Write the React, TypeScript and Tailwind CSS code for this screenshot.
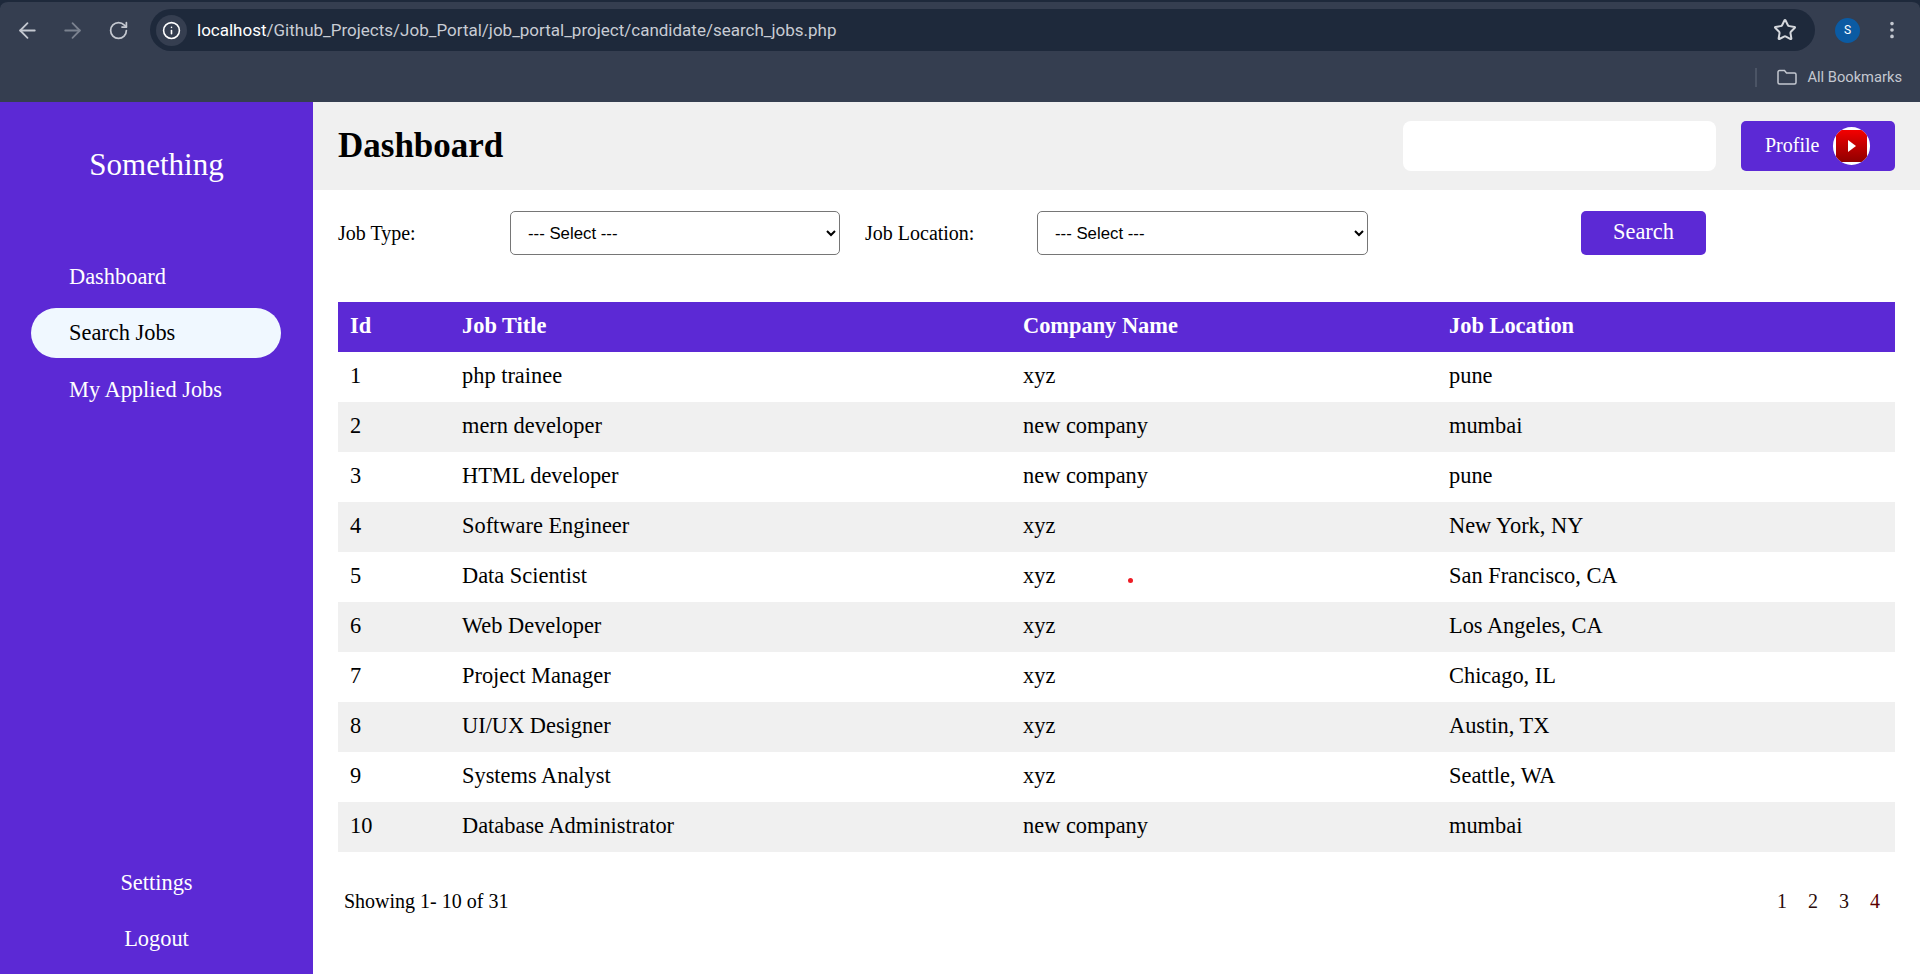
import React from "react";
import { ArrowLeft, ArrowRight, RotateCw, Info, Star, EllipsisVertical } from "lucide-react";

const JOBS = [
  ["1", "php trainee", "xyz", "pune"],
  ["2", "mern developer", "new company", "mumbai"],
  ["3", "HTML developer", "new company", "pune"],
  ["4", "Software Engineer", "xyz", "New York, NY"],
  ["5", "Data Scientist", "xyz", "San Francisco, CA"],
  ["6", "Web Developer", "xyz", "Los Angeles, CA"],
  ["7", "Project Manager", "xyz", "Chicago, IL"],
  ["8", "UI/UX Designer", "xyz", "Austin, TX"],
  ["9", "Systems Analyst", "xyz", "Seattle, WA"],
  ["10", "Database Administrator", "new company", "mumbai"],
];

const BrowserBar = () => (
  <div className="h-[102px] bg-[#1e293b] font-['Roboto',sans-serif]">
    <div className="h-full bg-[#353e50] pt-[7px] rounded-t-[8px] border-t-2 border-[#1e293b] box-border">
      <div className="flex items-center h-[42px]">
        <ArrowLeft size={25} strokeWidth={1.7} className="ml-[15px] text-[#c4c8d0]" />
        <ArrowRight size={25} strokeWidth={1.7} className="ml-[20px] text-[#7b828f]" />
        <RotateCw size={21} strokeWidth={2} className="ml-[23px] text-[#c4c8d0]" />
        <div className="ml-[21px] flex items-center h-[42px] w-[1665px] bg-[#1e293b] rounded-full">
          <div className="ml-[6px] w-[31px] h-[31px] rounded-full bg-[#353e50] flex items-center justify-center">
            <Info size={19} className="text-white" />
          </div>
          <span className="ml-[10px] pt-[2px] text-[17px] text-[#c8ccd4]"><span className="text-white">localhost</span>/Github_Projects/Job_Portal/job_portal_project/candidate/search_jobs.php</span>
          <Star size={24} strokeWidth={2} className="ml-auto mr-[18px] text-[#d5d8dd]" />
        </div>
        <div className="ml-[20px] w-[25px] h-[25px] rounded-full bg-[#0b5ba3] text-white text-[12px] flex items-center justify-center">S</div>
        <EllipsisVertical size={22} className="ml-[21px] text-[#c4c8d0]" />
      </div>
      <div className="flex items-center justify-end h-[26px] mt-[13px] pr-[18px]">
        <div className="w-[2px] h-[19px] bg-[#4b5465] mr-[20px]" />
        <svg width="20" height="16" viewBox="0 0 20 16" fill="none" stroke="#c4c8d0" strokeWidth="1.5" className="mr-[10px]">
          <path d="M1 3a1.5 1.5 0 0 1 1.5-1.5h5l2 2.5h8A1.5 1.5 0 0 1 19 5.5v8a1.5 1.5 0 0 1-1.5 1.5h-15A1.5 1.5 0 0 1 1 13.5z" />
        </svg>
        <span className="text-[14.7px] text-[#c4c8d0]">All Bookmarks</span>
      </div>
    </div>
  </div>
);

const Sidebar = () => (
  <aside className="w-[313px] shrink-0 h-[872px] bg-[#5c29d5] text-white flex flex-col">
    <h2 className="mt-[46px] text-center text-[31px] leading-[34px]">Something</h2>
    <ul className="mt-[69.5px] text-[22.4px] pl-[31px] pr-[32px] flex flex-col gap-[6.5px]">
      <li className="h-[50px] flex items-center pl-[38px]">Dashboard</li>
      <li className="h-[50px] flex items-center pl-[38px] bg-[#f0f8ff] text-black rounded-full">Search Jobs</li>
      <li className="h-[50px] flex items-center pl-[38px]">My Applied Jobs</li>
    </ul>
    <ul className="mt-auto mb-[10px] text-[22.4px] px-[31px] flex flex-col gap-[6.5px] text-center">
      <li className="h-[50px] flex items-center justify-center">Settings</li>
      <li className="h-[50px] flex items-center justify-center">Logout</li>
    </ul>
  </aside>
);

export default function App() {
  return (
    <div className="h-[974px] overflow-hidden bg-white font-['Liberation_Serif',serif] text-black">
      <BrowserBar />
      <div className="flex">
        <Sidebar />
        <main className="flex-1 relative">
          <header className="h-[88px] bg-[#f0f0f0] flex items-center pl-[25px] pr-[25px]">
            <h1 className="text-[35px] font-bold">Dashboard</h1>
            <div className="ml-auto w-[313px] h-[50px] bg-white rounded-[8px]" />
            <button className="ml-[25px] w-[154px] h-[50px] bg-[#5c29d5] text-white rounded-[5px] text-[20px] flex items-center pl-[24px]">
              <span className="pb-[2px]">Profile</span>
              {/* red play tile inside a white round frame */}
              <span className="ml-[14px] w-[37px] h-[38px] rounded-full bg-white overflow-hidden flex items-center justify-center">
                <span className="w-[31px] h-[32px] mb-[1px] rounded-[5px] bg-gradient-to-b from-[#f40000] to-[#900000] flex items-center justify-center">
                  <svg width="8" height="12" viewBox="0 0 8 12"><path d="M0 0l8 6-8 6z" fill="#fff" /></svg>
                </span>
              </span>
            </button>
          </header>

          <div className="flex items-center mt-[21px] ml-[25px] text-[20px]">
            <label className="w-[172px]">Job Type:</label>
            <select className="w-[330px] h-[44px] border border-[#767676] rounded-[5px] pl-[13px] pr-[4px] bg-white font-['Liberation_Sans',sans-serif] text-[16.8px]">
              <option>--- Select ---</option>
            </select>
            <label className="ml-[25px] w-[172px]">Job Location:</label>
            <select className="w-[331px] h-[44px] border border-[#767676] rounded-[5px] pl-[13px] pr-[4px] bg-white font-['Liberation_Sans',sans-serif] text-[16.8px]">
              <option>--- Select ---</option>
            </select>
            <button className="ml-[213px] w-[125px] h-[44px] bg-[#5c29d5] text-white rounded-[5px] text-[22.4px] pb-[2px]">Search</button>
          </div>

          <table className="ml-[25px] mt-[47px] w-[1557px] table-fixed border-collapse text-[22.4px]">
            <colgroup>
              <col className="w-[112px]" />
              <col className="w-[561px]" />
              <col className="w-[426px]" />
              <col className="w-[458px]" />
            </colgroup>
            <thead>
              <tr className="h-[50px] bg-[#5c29d5] text-white">
                <th className="text-left font-bold pl-[12px] pb-[2px]">Id</th>
                <th className="text-left font-bold pl-[12px] pb-[2px]">Job Title</th>
                <th className="text-left font-bold pl-[12px] pb-[2px]">Company Name</th>
                <th className="text-left font-bold pl-[12px] pb-[2px]">Job Location</th>
              </tr>
            </thead>
            <tbody>
              {JOBS.map((job, idx) => (
                <tr key={idx} className={`h-[50px] ${idx % 2 === 1 ? "bg-[#f0f0f0]" : "bg-white"}`}>
                  {job.map((cell, i) => (
                    <td key={i} className="pl-[12px] pb-[2px]">{cell}</td>
                  ))}
                </tr>
              ))}
            </tbody>
          </table>

          <div className="flex items-center justify-between ml-[31px] mr-[25px] mt-[34px] text-[20px]">
            <span>Showing 1- 10 of 31</span>
            <div className="flex gap-[21px] pr-[15px] text-[#2a0a0a]">
              <span>1</span>
              <span>2</span>
              <span>3</span>
              <span className="text-[#5a0000]">4</span>
            </div>
          </div>

          {/* mouse pointer highlight */}
          <div className="absolute left-[815px] top-[476px] w-[5px] h-[5px] rounded-full bg-[#ee1c25]" />
        </main>
      </div>
    </div>
  );
}
